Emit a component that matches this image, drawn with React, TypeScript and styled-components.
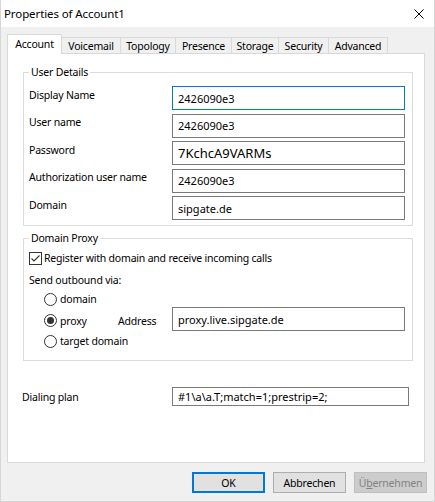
import styled, { createGlobalStyle } from 'styled-components';

const GlobalStyle = createGlobalStyle`
  html, body {
    margin: 0;
    padding: 0;
    background: #ffffff;
  }
  body {
    font-family: 'Noto Sans', 'Open Sans', sans-serif;
    font-size: 10.5px;
    letter-spacing: -0.2px;
    color: #000000;
  }
  * {
    box-sizing: border-box;
  }
`;

const tabs = [
  { label: 'Account', width: 55, active: true },
  { label: 'Voicemail', width: 60 },
  { label: 'Topology', width: 56 },
  { label: 'Presence', width: 57 },
  { label: 'Storage', width: 48 },
  { label: 'Security', width: 51 },
  { label: 'Advanced', width: 60 },
];

const userFields = [
  { label: 'Display Name', value: '2426090e3', focused: true },
  { label: 'User name', value: '2426090e3' },
  { label: 'Password', value: '7KchcA9VARMs', big: true },
  { label: 'Authorization user name', value: '2426090e3' },
  { label: 'Domain', value: 'sipgate.de' },
];

const CloseIcon = () => (
  <svg width="10" height="10" viewBox="0 0 10 10">
    <path d="M0.5 0.5 L9.5 9.5 M9.5 0.5 L0.5 9.5" stroke="#000" strokeWidth="1" fill="none" />
  </svg>
);

const CheckIcon = () => (
  <svg width="13" height="13" viewBox="0 0 13 13">
    <rect x="0.5" y="0.5" width="12" height="12" fill="#fff" stroke="#333" />
    <path d="M2.5 6.5 L5 9 L10.5 3.5" stroke="#333" strokeWidth="1.1" fill="none" />
  </svg>
);

const RadioIcon = ({ checked }: { checked?: boolean }) => (
  <svg width="13" height="13" viewBox="0 0 13 13">
    <circle cx="6.5" cy="6.5" r="6" fill="#fff" stroke="#333" />
    {checked && <circle cx="6.5" cy="6.5" r="3.5" fill="#333" />}
  </svg>
);

const App = () => {
  return (
    <>
      <GlobalStyle />
      <Window>
        <TitleBar>
          <Title>Properties of Account1</Title>
          <CloseButton>
            <CloseIcon />
          </CloseButton>
        </TitleBar>

        <TabStrip>
          {tabs.map(t => (
            <Tab key={t.label} $active={t.active} $width={t.width}>
              {t.label}
            </Tab>
          ))}
        </TabStrip>

        <Panel>
          <GroupBox>
            <Caption>User Details</Caption>
            <FieldGrid>
              {userFields.map(f => (
                <FieldRow key={f.label}>
                  <FieldLabel>{f.label}</FieldLabel>
                  <TextBox defaultValue={f.value} $focused={f.focused} $big={f.big} readOnly />
                </FieldRow>
              ))}
            </FieldGrid>
          </GroupBox>

          <ProxyGroup>
            <Caption>Domain Proxy</Caption>
            <CheckRow>
              <CheckIcon />
              <span>Register with domain and receive incoming calls</span>
            </CheckRow>
            <SendLabel>Send outbound via:</SendLabel>
            <RadioList>
              <RadioRow>
                <RadioOption>
                  <RadioIcon />
                  <span>domain</span>
                </RadioOption>
              </RadioRow>
              <ProxyRow>
                <RadioOption $width={74}>
                  <RadioIcon checked />
                  <span>proxy</span>
                </RadioOption>
                <AddressLabel>Address</AddressLabel>
                <TextBox defaultValue="proxy.live.sipgate.de" readOnly />
              </ProxyRow>
              <RadioRow $gap={2}>
                <RadioOption>
                  <RadioIcon />
                  <span>target domain</span>
                </RadioOption>
              </RadioRow>
            </RadioList>
          </ProxyGroup>

          <DialRow>
            <DialLabel>Dialing plan</DialLabel>
            <DialBox defaultValue="#1\a\a.T;match=1;prestrip=2;" readOnly />
          </DialRow>
        </Panel>

        <ButtonBar>
          <DialogButton $default>OK</DialogButton>
          <DialogButton>Abbrechen</DialogButton>
          <DialogButton disabled>
            Ü<u>b</u>ernehmen
          </DialogButton>
        </ButtonBar>
      </Window>
    </>
  );
};

const Window = styled.div`
  width: 435px;
  height: 502px;
  background: #f0f0f0;
  border: 1px solid #d6d6d6;
  border-top: none;
  display: flex;
  flex-direction: column;
`;

const TitleBar = styled.div`
  height: 27px;
  background: #ffffff;
  display: flex;
  align-items: center;
  justify-content: space-between;
  padding: 0 10px 0 3px;
`;

const Title = styled.div`
  font-size: 11.5px;
  letter-spacing: -0.1px;
  line-height: 16px;
`;

const CloseButton = styled.div`
  display: flex;
  width: 10px;
  height: 10px;
`;

const TabStrip = styled.div`
  display: flex;
  align-items: flex-end;
  height: 19px;
  margin-top: 7px;
  padding-left: 6px;
`;

const Tab = styled.div<{ $active?: boolean; $width: number }>`
  width: ${p => p.$width}px;
  height: ${p => (p.$active ? 20 : 16)}px;
  margin-bottom: ${p => (p.$active ? -1 : 0)}px;
  margin-left: ${p => (p.$active ? 0 : -1)}px;
  background: ${p => (p.$active ? '#ffffff' : '#f0f0f0')};
  border: 1px solid #d9d9d9;
  border-bottom: none;
  position: relative;
  z-index: ${p => (p.$active ? 1 : 0)};
  display: flex;
  align-items: center;
  justify-content: center;
  padding-bottom: ${p => (p.$active ? 2 : 0)}px;
  white-space: nowrap;
`;

const Panel = styled.div`
  width: 418px;
  height: 410px;
  margin-left: 6px;
  background: #ffffff;
  border: 1px solid #d9d9d9;
  padding: 18px 11px 0 15px;
`;

const GroupBox = styled.div`
  position: relative;
  border: 1px solid #dcdcdc;
  padding: 13px 7px 5px 5px;
`;

const ProxyGroup = styled(GroupBox)`
  margin-top: 12px;
  padding: 11px 7px 11px 5px;
`;

const Caption = styled.span`
  position: absolute;
  top: -8px;
  left: 5px;
  padding: 0 2px;
  background: #ffffff;
  line-height: 15px;
`;

const FieldGrid = styled.div`
  display: flex;
  flex-direction: column;
  gap: 3.5px;
`;

const FieldRow = styled.div`
  display: grid;
  grid-template-columns: 143px 233px;
`;

const FieldLabel = styled.div`
  line-height: 17px;
  padding-top: 0.5px;
`;

const TextBox = styled.input<{ $focused?: boolean; $big?: boolean }>`
  width: 233px;
  height: 24px;
  border: 1px solid ${p => (p.$focused ? '#0078d7' : '#7a7a7a')};
  outline: none;
  padding: 0 5px;
  margin: 0;
  background: #ffffff;
  font-family: inherit;
  font-size: ${p => (p.$big ? '13px' : '11px')};
  letter-spacing: 0;
  color: #000000;
`;

const CheckRow = styled.div`
  display: flex;
  align-items: center;
  gap: 2px;
  height: 16px;
  white-space: nowrap;

  svg {
    flex-shrink: 0;
  }
`;

const SendLabel = styled.div`
  margin-top: 6px;
  line-height: 16px;
`;

const RadioList = styled.div`
  display: flex;
  flex-direction: column;
  margin-top: 3px;
  padding-left: 15px;
`;

const RadioRow = styled.div<{ $gap?: number }>`
  display: flex;
  align-items: center;
  height: 16px;
  margin-top: ${p => p.$gap || 0}px;
`;

const RadioOption = styled.div<{ $width?: number }>`
  display: flex;
  align-items: center;
  gap: 3px;
  width: ${p => (p.$width ? `${p.$width}px` : 'auto')};
  line-height: 16px;
`;

const ProxyRow = styled.div`
  display: flex;
  align-items: center;
  height: 24px;

  ${RadioOption} {
    padding-top: 3px;
  }
`;

const AddressLabel = styled.div`
  width: 54px;
  padding-top: 3px;
  line-height: 16px;
`;

const DialRow = styled.div`
  display: flex;
  align-items: center;
  margin-top: 26px;
  margin-left: -1px;
`;

const DialLabel = styled.div`
  width: 150px;
  line-height: 16px;
`;

const DialBox = styled(TextBox)`
  width: 237px;
  height: 19px;
`;

const ButtonBar = styled.div`
  display: flex;
  justify-content: flex-end;
  gap: 8px;
  margin-top: 9px;
  padding-right: 7px;
`;

const DialogButton = styled.button<{ $default?: boolean }>`
  width: 73px;
  height: 21px;
  margin: 0;
  padding: 0;
  font-family: inherit;
  font-size: 10.5px;
  letter-spacing: -0.2px;
  color: #000000;
  background: #e1e1e1;
  border: ${p => (p.$default ? '2px solid #0078d7' : '1px solid #adadad')};

  &:disabled {
    background: #cccccc;
    border-color: #bfbfbf;
    color: #838383;
  }
`;

export default App;
